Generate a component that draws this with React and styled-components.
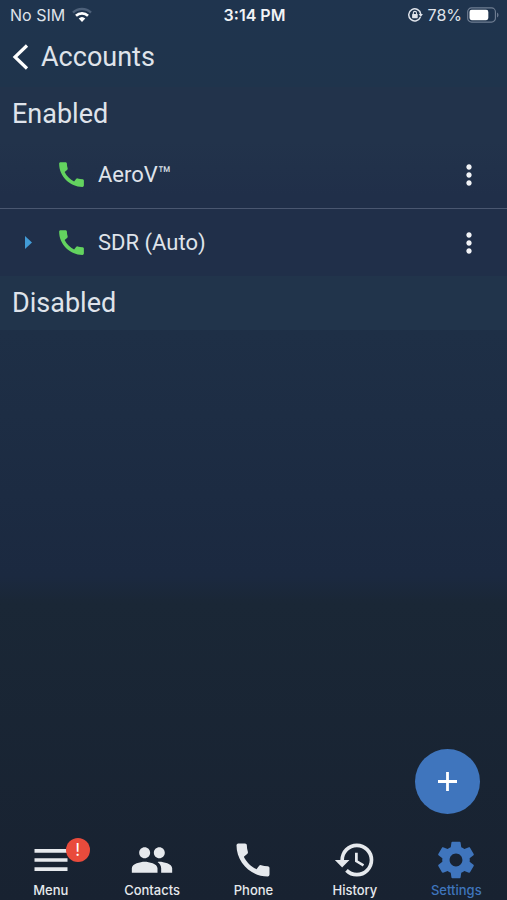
import styled, { createGlobalStyle } from 'styled-components';
import {
  MdCall,
  MdHistory,
  MdMenu,
  MdMoreVert,
  MdPeople,
} from 'react-icons/md';

const GlobalStyle = createGlobalStyle`
  * {
    box-sizing: border-box;
  }

  body {
    margin: 0;
    background-color: #192433;
  }
`;

const Screen = styled.div`
  position: relative;
  display: flex;
  flex-direction: column;
  min-height: 100vh;
  color: #dfe3ea;
  font-family: Roboto, 'Liberation Sans', sans-serif;
  background: linear-gradient(
    #1f344e 0%,
    #1f344c 10%,
    #1e2f46 37%,
    #1b2940 64%,
    #1a2736 67%,
    #182231 100%
  );
`;

const StatusBar = styled.div`
  display: grid;
  grid-template-columns: 1fr auto 1fr;
  align-items: center;
  height: 30px;
  padding: 0 8px 0 10px;
  font-family: Inter, sans-serif;
  font-size: 16px;
`;

const StatusGroup = styled.div`
  display: flex;
  align-items: center;
  justify-content: ${({ $end }) => ($end ? 'flex-end' : 'flex-start')};
  gap: ${({ $end }) => ($end ? '5px' : '7px')};
`;

const Time = styled.span`
  color: #f1f3f6;
  font-weight: 600;
`;

const Header = styled.header`
  display: flex;
  align-items: center;
  gap: 12px;
  height: 57px;
  padding: 0 12px 3px;
`;

const BackButton = styled.button`
  display: flex;
  padding: 0;
  border: none;
  background: none;
  color: #fff;
`;

const Title = styled.h1`
  margin: 0;
  font-size: 27px;
  font-weight: 400;
`;

const Main = styled.main`
  flex: 1;
`;

const SectionTitle = styled.h2`
  margin: 0;
  padding: 0 12px;
  background-color: ${({ $shade }) => $shade};
  font-size: 27px;
  font-weight: 400;
  line-height: 54px;
`;

const AccountList = styled.ul`
  margin: 0;
  padding: 0;
  list-style: none;
  background: linear-gradient(#22334b, #202f49 40%);
`;

const AccountRow = styled.li`
  display: flex;
  align-items: center;
  height: 67px;
  padding: 0 22px 0 12px;

  & + & {
    height: 68px;
    border-top: 1px solid #4a5770;
  }
`;

const ExpandSlot = styled.div`
  display: flex;
  width: 43px;
  padding-left: 13px;
`;

const AccountName = styled.span`
  flex: 1;
  margin-left: 10px;
  font-size: 22px;
`;

const IconButton = styled.button`
  display: flex;
  padding: 0;
  border: none;
  background: none;
  color: ${({ $color }) => $color || '#f1f3f6'};
`;

const AddButton = styled.button`
  position: absolute;
  right: 27px;
  bottom: 86px;
  display: flex;
  align-items: center;
  justify-content: center;
  width: 65px;
  height: 65px;
  padding: 0;
  border: none;
  border-radius: 50%;
  background-color: #3f75bd;
  color: #fff;
`;

const TabBar = styled.nav`
  display: grid;
  grid-template-columns: repeat(5, 1fr);
  height: 62px;
`;

const Tab = styled.a`
  display: flex;
  flex-direction: column;
  align-items: center;
  color: ${({ $active }) => ($active ? '#3f75bd' : '#e6e9ed')};
  font-family: Inter, sans-serif;
  font-size: 13px;
  font-weight: 500;
  line-height: 16px;
  text-decoration: none;
`;

const TabIcon = styled.span`
  position: relative;
  display: flex;
  height: 44px;
`;

const Badge = styled.span`
  position: absolute;
  top: 0;
  right: -17px;
  width: 24px;
  height: 24px;
  border-radius: 50%;
  background-color: #e94b3c;
  color: #fff;
  font-size: 17px;
  font-weight: 400;
  line-height: 24px;
  text-align: center;
`;

const WifiIcon = () => (
  <svg width="20" height="16" viewBox="0 0 20 16" fill="none">
    <path d="M1 5.6a13 13 0 0 1 18 0" stroke="#4d6079" strokeWidth="2.4" />
    <path d="M4 8.8a8.6 8.6 0 0 1 12 0" stroke="#fff" strokeWidth="2.6" />
    <path d="M6.7 11.6a4.9 4.9 0 0 1 6.6 0L10 15z" fill="#fff" />
  </svg>
);

const RotationLockIcon = () => (
  <svg width="15" height="14" viewBox="0 0 15 14" fill="none" stroke="#dfe3ea">
    <path d="M12.4 8.9A6 6 0 1 1 12.7 6" strokeWidth="1.5" />
    <path d="M10.7 6h4.2l-2.1 3z" fill="#dfe3ea" stroke="none" />
    <rect x="4.1" y="6" width="5.6" height="4.2" rx="0.6" fill="#dfe3ea" stroke="none" />
    <path d="M5.3 6.4V5a1.6 1.6 0 0 1 3.2 0v1.4" strokeWidth="1.1" />
  </svg>
);

const BatteryIcon = () => (
  <svg width="32" height="16" viewBox="0 0 33 16" fill="none">
    <rect x="0.7" y="0.7" width="28.6" height="14.6" rx="4" stroke="#6f7d92" strokeWidth="1.2" />
    <rect x="2.6" y="2.6" width="19.4" height="10.8" rx="2.2" fill="#fff" />
    <path d="M31 5.4a3 3 0 0 1 0 5.2z" fill="#6f7d92" />
  </svg>
);

const BackIcon = () => (
  <svg width="17" height="28" viewBox="0 0 17 28" fill="none">
    <path d="M15 2.5 3 14l12 11.5" stroke="currentColor" strokeWidth="3.2" />
  </svg>
);

const ExpandIcon = () => (
  <svg width="7" height="13" viewBox="0 0 7 13">
    <path d="M0 0v13l7-6.5z" fill="currentColor" />
  </svg>
);

const PlusIcon = () => (
  <svg width="19" height="19" viewBox="0 0 19 19">
    <path d="M9.5 0v19M0 9.5h19" stroke="currentColor" strokeWidth="2.8" />
  </svg>
);

const GearIcon = () => (
  <svg width="44" height="44" viewBox="0 0 24 24" fill="currentColor">
    <path d="M19.43 12.98c.04-.32.07-.64.07-.98s-.03-.66-.07-.98l2.11-1.65c.19-.15.24-.42.12-.64l-2-3.46c-.12-.22-.39-.3-.61-.22l-2.49 1c-.52-.4-1.08-.73-1.69-.98l-.38-2.65C14.46 2.18 14.25 2 14 2h-4c-.25 0-.46.18-.49.42l-.38 2.65c-.61.25-1.17.59-1.69.98l-2.49-1c-.23-.09-.49 0-.61.22l-2 3.46c-.13.22-.07.49.12.64l2.11 1.65c-.04.32-.07.65-.07.98s.03.66.07.98l-2.11 1.65c-.19.15-.24.42-.12.64l2 3.46c.12.22.39.3.61.22l2.49-1c.52.4 1.08.73 1.69.98l.38 2.65c.03.24.24.42.49.42h4c.25 0 .46-.18.49-.42l.38-2.65c.61-.25 1.17-.59 1.69-.98l2.49 1c.23.09.49 0 .61-.22l2-3.46c.12-.22.07-.49-.12-.64l-2.11-1.65zM12 15.5c-1.93 0-3.5-1.57-3.5-3.5s1.57-3.5 3.5-3.5 3.5 1.57 3.5 3.5-1.57 3.5-3.5 3.5z" />
  </svg>
);

const accounts = [
  { name: 'AeroV™', expandable: false },
  { name: 'SDR (Auto)', expandable: true },
];

const tabs = [
  { label: 'Menu', icon: <MdMenu size={44} />, alert: true },
  { label: 'Contacts', icon: <MdPeople size={44} /> },
  { label: 'Phone', icon: <MdCall size={44} /> },
  { label: 'History', icon: <MdHistory size={44} /> },
  { label: 'Settings', icon: <GearIcon />, active: true },
];

const App = () => {
  return (
    <>
      <GlobalStyle />
      <Screen>
        <StatusBar>
          <StatusGroup>
            <span>No SIM</span>
            <WifiIcon />
          </StatusGroup>
          <Time>3:14 PM</Time>
          <StatusGroup $end>
            <RotationLockIcon />
            <span>78%</span>
            <BatteryIcon />
          </StatusGroup>
        </StatusBar>

        <Header>
          <BackButton type="button" aria-label="Back">
            <BackIcon />
          </BackButton>
          <Title>Accounts</Title>
        </Header>

        <Main>
          <SectionTitle $shade="#22334b">Enabled</SectionTitle>
          <AccountList>
            {accounts.map(({ name, expandable }) => (
              <AccountRow key={name}>
                <ExpandSlot>
                  {expandable && (
                    <IconButton type="button" aria-label="Expand" $color="#429bd6">
                      <ExpandIcon />
                    </IconButton>
                  )}
                </ExpandSlot>
                <MdCall size={33} color="#63d35f" />
                <AccountName>{name}</AccountName>
                <IconButton type="button" aria-label={`Options for ${name}`}>
                  <MdMoreVert size={32} />
                </IconButton>
              </AccountRow>
            ))}
          </AccountList>
          <SectionTitle $shade="#21344b">Disabled</SectionTitle>
        </Main>

        <AddButton type="button" aria-label="Add account">
          <PlusIcon />
        </AddButton>

        <TabBar>
          {tabs.map(({ label, icon, alert, active }) => (
            <Tab
              key={label}
              href={`#${label.toLowerCase()}`}
              $active={active}
              aria-current={active ? 'page' : undefined}
            >
              <TabIcon>
                {icon}
                {alert && <Badge>!</Badge>}
              </TabIcon>
              {label}
            </Tab>
          ))}
        </TabBar>
      </Screen>
    </>
  );
};

export default App;
